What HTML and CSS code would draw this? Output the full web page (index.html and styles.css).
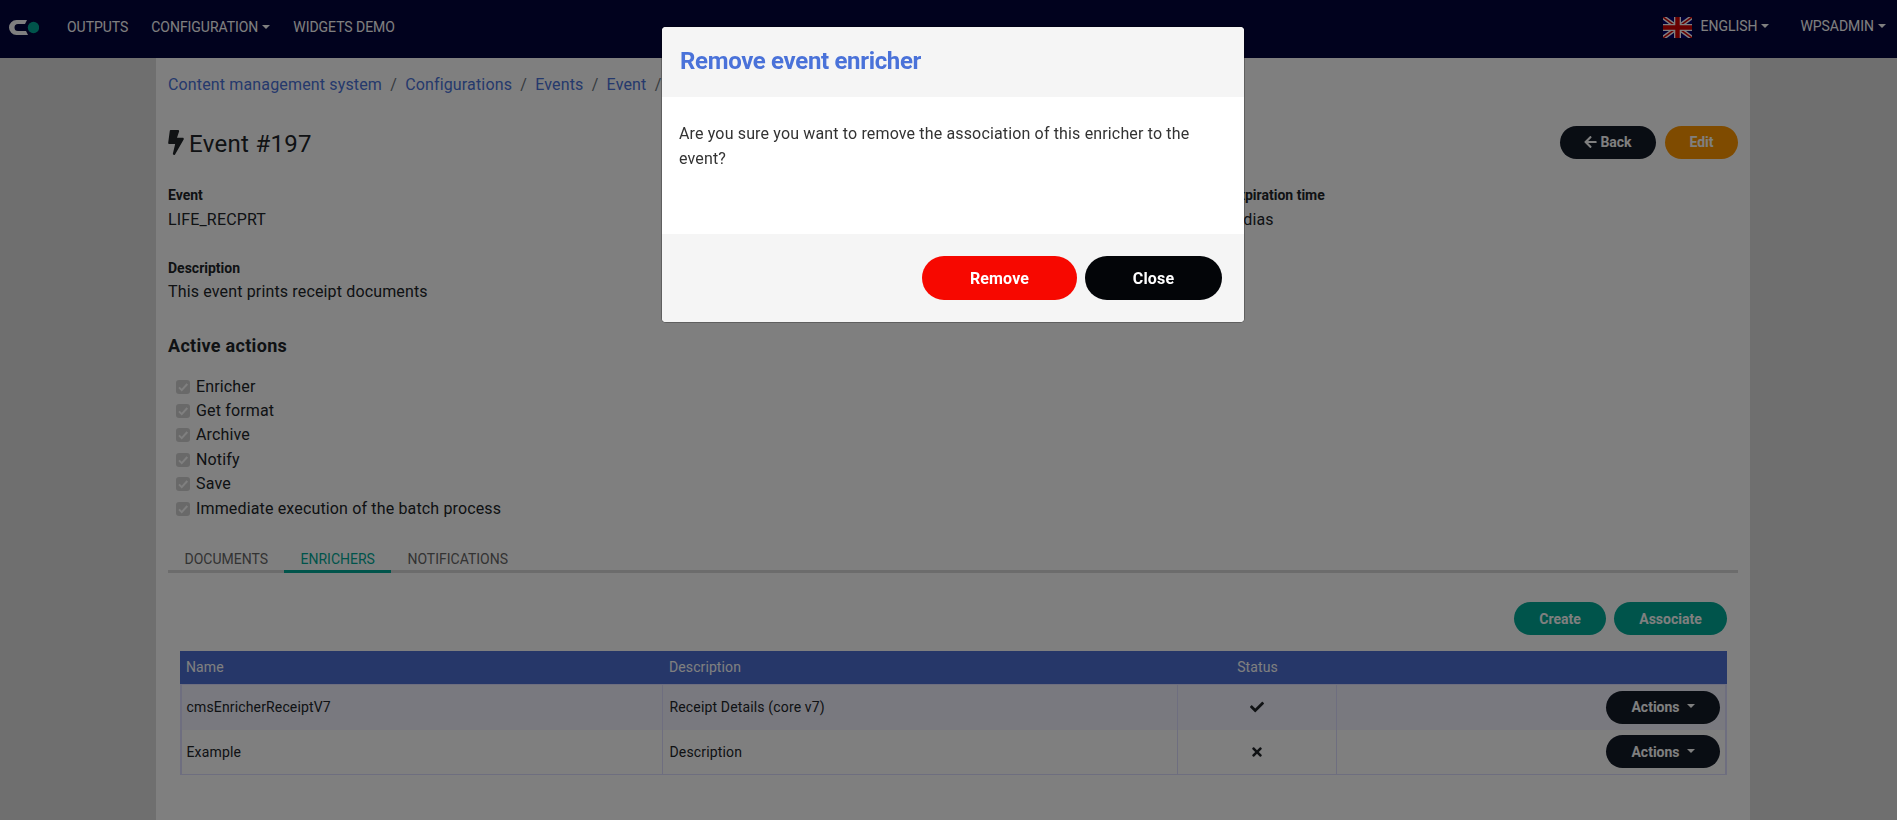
FILE: index.html
```html
<!DOCTYPE html>
<html lang="en">
<head>
<meta charset="utf-8">
<title>Event #197</title>
<link rel="stylesheet" href="styles.css">
</head>
<body>
<nav class="navbar">
  <svg class="logo" viewBox="0 0 30 15"><path d="M18 0H7.5a7.5 7.5 0 0 0 0 15H19l-2-4H9a3.500 3.500 0 0 1 0-7h7z" fill="#fff"/><circle cx="24.500" cy="7.500" r="5.700" fill="#00a896"/></svg>
  <div class="nav-left">
    <a>OUTPUTS</a>
    <a>CONFIGURATION<i class="caret"></i></a>
    <a>WIDGETS DEMO</a>
  </div>
  <div class="nav-right">
    <svg class="flag" viewBox="0 0 29 21"><rect width="29" height="21" fill="#00006c"/><path d="M0 0l29 21M29 0L0 21" stroke="#fff" stroke-width="4.400"/><path d="M0 0l29 21M29 0L0 21" stroke="#d00000" stroke-width="1.500"/><path d="M14.500 0v21M0 10.500h29" stroke="#fff" stroke-width="7"/><path d="M14.500 0v21M0 10.500h29" stroke="#d00000" stroke-width="4.400"/></svg>
    <a>ENGLISH<i class="caret"></i></a>
    <a class="user">WPSADMIN<i class="caret"></i></a>
  </div>
</nav>
<main class="page">
  <div class="breadcrumb"><a>Content management system</a><span>/</span><a>Configurations</a><span>/</span><a>Events</a><span>/</span><a>Event</a><span>/</span></div>
  <div class="title-row">
    <svg class="bolt" viewBox="0 0 320 512"><path fill="#212529" d="M296 160H180.6l42.6-129.8C227.2 15 215.7 0 200 0H56C44 0 33.8 8.9 32.2 20.8l-32 240C-1.7 275.2 9.5 288 24 288h118.7L96.6 482.5c-3.6 15.2 8 29.5 23.3 29.5 8.4 0 16.4-4.4 20.8-12l176-304c9.3-15.9-2.2-36-20.7-36z"/></svg>
    <h1>Event #197</h1>
    <div class="title-actions">
      <button class="btn dark back"><svg class="arrow" viewBox="0 0 448 512"><path fill="#fff" d="M257.500 445.100l-22.200 22.200c-9.400 9.400-24.600 9.400-33.900 0L7 273c-9.400-9.400-9.400-24.600 0-33.900L201.400 44.700c9.400-9.400 24.600-9.400 33.900 0l22.200 22.200c9.500 9.500 9.300 25-.4 34.300L136.600 216H424c13.300 0 24 10.700 24 24v32c0 13.300-10.700 24-24 24H136.600l120.500 114.800c9.800 9.300 10 24.800.4 34.300z"/></svg>Back</button>
      <button class="btn orange">Edit</button>
    </div>
  </div>
  <div class="facts">
    <div><b>Event</b><p>LIFE_RECPRT</p></div>
    <div><b>Expiration time</b><p>5 dias</p></div>
  </div>
  <div class="facts second"><div><b>Description</b><p>This event prints receipt documents</p></div></div>
  <h2>Active actions</h2>
  <ul class="checks">
    <li><svg viewBox="0 0 14 14"><path d="M3 7.400l2.700 2.700L11.300 4"/></svg>Enricher</li>
    <li><svg viewBox="0 0 14 14"><path d="M3 7.400l2.700 2.700L11.300 4"/></svg>Get format</li>
    <li><svg viewBox="0 0 14 14"><path d="M3 7.400l2.700 2.700L11.300 4"/></svg>Archive</li>
    <li><svg viewBox="0 0 14 14"><path d="M3 7.400l2.700 2.700L11.300 4"/></svg>Notify</li>
    <li><svg viewBox="0 0 14 14"><path d="M3 7.400l2.700 2.700L11.300 4"/></svg>Save</li>
    <li><svg viewBox="0 0 14 14"><path d="M3 7.400l2.700 2.700L11.300 4"/></svg>Immediate execution of the batch process</li>
  </ul>
  <div class="tabs"><a>DOCUMENTS</a><a class="active">ENRICHERS</a><a>NOTIFICATIONS</a></div>
  <div class="toolbar"><button class="btn teal create">Create</button><button class="btn teal assoc">Associate</button></div>
  <div class="grid">
    <div class="row head"><div>Name</div><div>Description</div><div class="mid">Status</div><div></div></div>
    <div class="row odd"><div>cmsEnricherReceiptV7</div><div>Receipt Details (core v7)</div>
      <div class="mid"><svg class="st" viewBox="0 0 512 512"><path fill="#212529" d="M173.898 439.404l-166.400-166.400c-9.997-9.997-9.997-26.206 0-36.204l36.203-36.204c9.997-9.998 26.207-9.998 36.204 0L192 312.690 432.095 72.596c9.997-9.997 26.207-9.997 36.204 0l36.203 36.204c9.997 9.997 9.997 26.206 0 36.204l-294.400 294.401c-9.998 9.997-26.207 9.997-36.204-.001z"/></svg></div>
      <div class="end"><button class="btn dark act">Actions<i class="caret"></i></button></div></div>
    <div class="row"><div>Example</div><div>Description</div>
      <div class="mid"><svg class="stx" viewBox="0 0 352 512"><path fill="#212529" d="M242.720 256l100.070-100.070c12.280-12.280 12.280-32.190 0-44.480l-22.240-22.240c-12.280-12.280-32.190-12.280-44.480 0L176 189.280 75.930 89.210c-12.280-12.280-32.190-12.280-44.480 0L9.210 111.450c-12.280 12.280-12.280 32.190 0 44.480L109.280 256 9.210 356.070c-12.280 12.280-12.280 32.190 0 44.480l22.240 22.240c12.280 12.280 32.200 12.280 44.480 0L176 322.720l100.070 100.070c12.280 12.280 32.200 12.280 44.480 0l22.240-22.240c12.280-12.280 12.280-32.190 0-44.480L242.720 256z"/></svg></div>
      <div class="end"><button class="btn dark act">Actions<i class="caret"></i></button></div></div>
  </div>
</main>
<div class="backdrop">
  <div class="modal">
    <header>Remove event enricher</header>
    <div class="modal-body">Are you sure you want to remove the association of this enricher to the event?</div>
    <footer><button class="mbtn red">Remove</button><button class="mbtn black">Close</button></footer>
  </div>
</div>
</body>
</html>
```
FILE: styles.css
```css
* { box-sizing: border-box; }
body { margin: 0; height: 820px; overflow: hidden; background: #dfdfdf; font-family: Roboto, sans-serif; font-size: 16px; line-height: 24px; letter-spacing: .15px; color: #212529; }
h1, h2, p, ul { margin: 0; padding: 0; font-weight: 400; }
button { font-family: inherit; border: 0; padding: 0; }
.navbar { height: 58px; background: #03043c; display: flex; align-items: flex-start; color: #fff; font-size: 14px; letter-spacing: -.04px; padding-left: 9px; }
.logo { width: 30px; height: 15px; margin-top: 20px; }
.nav-left { display: flex; margin: 15px 0 0 28px; gap: 23px; }
.nav-right { display: flex; margin: 14px 11px 0 auto; }
.flag { width: 29px; height: 21px; margin: 3px 9px 0 0; }
.user { margin-left: 31px; }
.caret { display: inline-block; border: 4px solid transparent; border-top-color: currentColor; border-bottom: 0; margin-left: 4px; vertical-align: 3px; }
.page { width: 1594px; height: 762px; margin-left: 156px; padding: 15px 12px 0; background: #fff; }
.breadcrumb { display: flex; gap: 8.200px; height: 24px; color: #6c757d; }
.breadcrumb a { color: #4a72d9; }
.title-row { display: flex; align-items: center; height: 34px; margin-top: 28px; }
.bolt { width: 16px; height: 25px; }
h1 { font-size: 24px; margin: 3px 0 0 5px; letter-spacing: .3px; }
.title-actions { margin-left: auto; display: flex; gap: 9px; }
.btn { height: 33px; border-radius: 17px; color: #fff; font-size: 14px; font-weight: 700; display: flex; align-items: center; justify-content: center; }
.dark { background: #131a27; }
.orange { background: #ff9700; width: 73px; }
.teal { background: #00a896; }
.back { width: 96px; }
.arrow { width: 13px; height: 14px; margin-right: 3px; }
.facts { display: grid; grid-template-columns: 1062px 1fr; margin-top: 24px; }
.facts b { display: block; font-size: 14px; font-weight: 700; letter-spacing: 0; }
.facts p { padding-top: 1px; }
.facts.second { margin-top: 24px; }
.facts.second p { padding-top: 0; }
h2 { font-size: 18px; font-weight: 700; letter-spacing: .3px; margin-top: 30px; }
.checks { list-style: none; margin-top: 16.500px; }
.checks li { height: 24.400px; display: flex; align-items: center; padding-left: 7.500px; }
.checks svg { width: 14px; height: 14px; margin-right: 6.500px; border-radius: 3px; background: #d2d2d2; fill: none; stroke: #fff; stroke-width: 2; }
.tabs { display: flex; height: 29px; margin-top: 23.500px; border-bottom: 3px solid #d8d8d8; font-size: 14px; letter-spacing: 0; color: #666; }
.tabs a { height: 29px; padding: 3px 16px 0 16.500px; }
.tabs .active { color: #00a896; border-bottom: 3px solid #00a896; }
.toolbar { display: flex; justify-content: flex-end; gap: 8px; margin: 29px 11px 16px 0; }
.create { width: 92px; }
.assoc { width: 113px; }
.grid { margin: 0 11px 0 12px; width: 1547px; font-size: 14px; letter-spacing: .15px; border-bottom: 1px solid #dcdcff; }
.row { display: grid; grid-template-columns: 481px 515px 159px 1fr; height: 44.500px; border: solid #dcdcff; border-width: 0 2px 0 2px; }
.row > div { display: flex; align-items: center; padding: 0 5px 1px; border-right: 1px solid #dcdcff; }
.row > div:first-child { padding-left: 4.500px; }
.row > div:nth-child(2) { padding-left: 6.500px; }
.row > div:last-child { border-right: 0; }
.row .mid { justify-content: center; }
.row .end { justify-content: flex-end; }
.row.odd { height: 45.500px; border-top: 1px solid #dcdcff; background: #f2f2ff; }
.row.head { height: 33px; background: #4d6fd3; color: #fff; border-color: #4d6fd3; letter-spacing: .1px; }
.row.head > div { border: 0; }
.row.head > div:first-child { padding-left: 4px; }
.row.head > div:nth-child(2) { padding-left: 6px; }
.st { width: 14px; height: 14px; }
.stx { width: 10px; height: 14px; }
.act { width: 114px; }
.act .caret { margin: -2px 0 0 7px; }
.backdrop { position: fixed; inset: 0; background: rgba(0,0,0,.5); }
.modal { margin: 27px 0 0 662px; width: 582px; height: 295px; border-radius: 4px; overflow: hidden; background: #fff; box-shadow: 0 0 0 1px rgba(0,0,0,.25); }
.modal header { height: 70px; padding: 22px 18px; background: #f5f5f5; color: #4a72d9; font-size: 24px; font-weight: 700; letter-spacing: -.33px; }
.modal-body { height: 137px; padding: 24px 17px; line-height: 25px; color: #333; }
.modal footer { height: 88px; background: #f5f5f5; display: flex; gap: 8px; justify-content: flex-end; padding: 22px; }
.mbtn { height: 44px; border-radius: 22px; color: #fff; font-size: 16px; font-weight: 700; letter-spacing: .15px; }
.red { width: 155px; background: #f70800; }
.black { width: 137px; background: #030508; }
```
